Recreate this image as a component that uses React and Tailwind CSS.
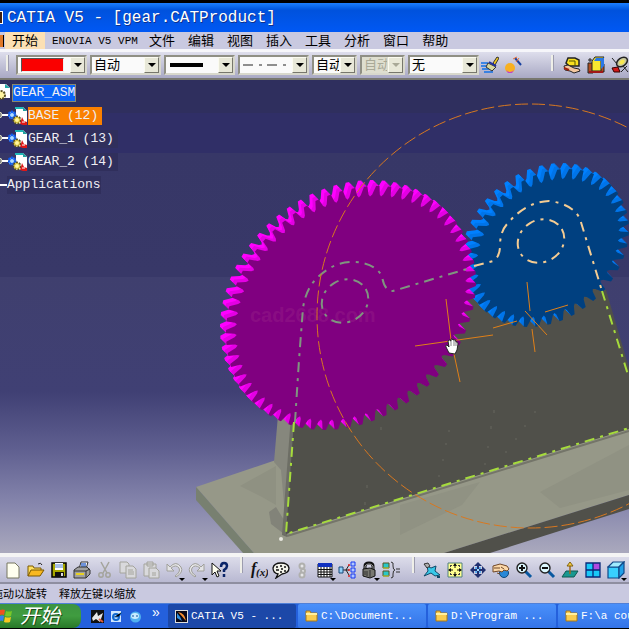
// 歯車の輪郭 (楕円上に歯を並べる)
const gearPath = ({ cx, cy, w, h, skew, teeth, root, phase }) => {
  const k = Math.sqrt(h * h - skew * skew);
  const step = (Math.PI * 2) / teeth;
  const profile = [
    [-0.5, root],
    [-0.34, root + (1 - root) * 0.2],
    [-0.14, 1],
    [0.14, 1],
    [0.34, root + (1 - root) * 0.2],
  ];
  const points = [];
  for (let i = 0; i < teeth; i++) {
    profile.forEach(([t, r]) => {
      const a = (i + t + phase) * step;
      const x = cx + r * w * Math.cos(a);
      const y = cy + r * (skew * Math.cos(a) + k * Math.sin(a));
      points.push(`${x.toFixed(1)},${y.toFixed(1)}`);
    });
  }
  return `M${points.join("L")}Z`;
};

const Gear = ({ shape, face, side, shade }) => {
  const d = gearPath(shape);
  return (
    <g>
      {[6, 5, 4, 3, 2, 1].map((n) => (
        <path key={n} d={d} fill={n > 3 ? side : shade} transform={`translate(${-n} ${-n})`} />
      ))}
      <path d={d} fill={face} />
    </g>
  );
};

const purpleGear = { cx: 351, cy: 308, w: 125, h: 122, skew: -26, teeth: 64, root: 0.915, phase: 0.2 };
const blueGear = { cx: 548, cy: 248, w: 81, h: 79, skew: -19, teeth: 42, root: 0.87, phase: 0.4 };

const Scene = () => (
  <svg
    className="absolute inset-0 h-full w-full"
    viewBox="0 80 629 473"
    preserveAspectRatio="xMinYMin slice"
    fill="none"
  >
    <defs>
      <linearGradient id="sky" x1="0" y1="80" x2="0" y2="553" gradientUnits="userSpaceOnUse">
        <stop offset="0" stopColor="#2f2f5e" />
        <stop offset="0.07" stopColor="#2f2f5e" />
        <stop offset="0.07" stopColor="#302f67" />
        <stop offset="0.154" stopColor="#302f67" />
        <stop offset="0.154" stopColor="#373767" />
        <stop offset="0.416" stopColor="#383868" />
        <stop offset="0.416" stopColor="#3f3f6e" />
        <stop offset="0.66" stopColor="#404074" />
        <stop offset="0.78" stopColor="#5f5f90" />
        <stop offset="0.9" stopColor="#8787ad" />
        <stop offset="1" stopColor="#aaa9bd" />
      </linearGradient>
    </defs>
    <rect y="80" width="1600" height="473" fill="url(#sky)" />

    {/* ベース */}
    <path d="M196 487L276 460L629 400V495L444 553H254Z" fill="#969888" />
    <path d="M240 486L276 466V505L262 497Z" fill="#8f9182" />
    <path d="M196 487L254 553H243L196 500Z" fill="#788070" />
    <path d="M444 553L629 495V509L490 553Z" fill="#50504a" />
    <path d="M400 505L480 482L462 505L400 535Z M540 492L629 445V490L560 508Z" fill="#909283" />
    <path d="M269 512L276 507L284 520V534L271 524Z" fill="#828379" />
    <path d="M278 415H296L287 538L281 470L274 462Z" fill="#86877d" />
    <path d="M291 415H298L287 537L282 535Z" fill="#6d6e65" />
    <path d="M286 534L294 420L303 300L390 290L480 265L600 290H606L629 368V429Z" fill="#50504a" />
    <path d="M287 536L629 431" stroke="#747569" strokeWidth="2" />
    <circle cx="281" cy="539" r="2" fill="#e8e8e0" />
    <path
      d="M381 427v3M367 485v3M365 502v3M449 430v2M446 443v2M443 459v2M439 475v2M494 410v3M491 426v3M488 446v2M485 463v2M535 411v2M525 425v2M516 438v2M506 451v2"
      stroke="#66665f"
    />

    <Gear shape={blueGear} face="#004080" side="#0080ff" shade="#0075ea" />
    <Gear shape={purpleGear} face="#800080" side="#ff00ff" shade="#e400e4" />

    <text
      x="250"
      y="322"
      fontSize="20"
      fontWeight="bold"
      fill="#b04890"
      fillOpacity="0.2"
      fontFamily="'Liberation Sans', sans-serif"
    >
      cad2688.com
    </text>

    {/* 鎖線のエッジ */}
    <g strokeWidth="2" strokeDasharray="10 6 3 6">
      <path d="M294 422L286 534L629 428" stroke="#a6dc3c" />
      <path d="M602 291L629 378" stroke="#a6dc3c" />
      <path
        d="M295 422L299 360L303 308Q306 288 318 277Q334 262 352 262Q374 262 382 276Q384 291 393 291L470 268"
        stroke="#7f957f"
      />
      <ellipse cx="345" cy="301" rx="24" ry="21" transform="rotate(-30 345 301)" stroke="#7f957f" />
      <path
        d="M474 266L493 261Q500 257 500 246Q500 231 508 223Q526 202 549 201Q573 204 580 219L602 291"
        stroke="#f5cc92"
      />
      <ellipse cx="541" cy="241" rx="24" ry="21" transform="rotate(-30 541 241)" stroke="#f5cc92" />
    </g>

    <ellipse cx="530" cy="316" rx="213" ry="212" stroke="#d87820" strokeDasharray="13 4" />
    <path
      d="M446 299L451 340L460 382M415 346L493 335M527 282L530 311M532 329L535 352M525 311L547 335M545 312L568 305M493 328L517 321"
      stroke="#e08018"
    />

    {/* 手のカーソル */}
    <path
      d="M449 353L446 347Q445 345 447 345L449 347L448 341Q449 339 451 341L451 339Q452 338 453 340L454 340Q456 339 456 342L457 342Q458 342 458 344L457 350L455 354Z"
      fill="#fff"
      stroke="#222"
    />
    <path d="M451 341v5M454 341v5M456 342v4" stroke="#555" strokeWidth="0.7" />
  </svg>
);

const PartIcon = () => (
  <svg width="20" height="20" viewBox="0 0 20 20" className="shrink-0">
    <path d="M8 1h7l4 4v13H8z" fill="#fff" />
    <path d="M7 2h8" stroke="#20b8b8" strokeWidth="2" />
    <path d="M15 1v4h4z" fill="#20a0a0" />
    <circle cx="4" cy="9" r="3.5" fill="#b0dcff" stroke="#0858f0" strokeWidth="2" strokeDasharray="2 1" />
    <circle cx="4" cy="9" r="2.5" fill="none" stroke="#0858f0" />
    <circle cx="9" cy="14" r="3.5" fill="#fff6a0" stroke="#595020" strokeWidth="2" strokeDasharray="2 1" />
    <circle cx="9" cy="14" r="2.5" fill="none" stroke="#d8c030" />
    <path d="M14 11l2 4 3 1v3h-4l-3-1 1-3z" fill="#e01818" />
    <path d="M14 16h3" stroke="#fff" />
  </svg>
);

const treeNodes = [
  { name: "BASE (12)", style: "bg-[#fa8000]" },
  { name: "GEAR_1 (13)", style: "bg-[#302f5c]" },
  { name: "GEAR_2 (14)", style: "bg-[#302f5c]" },
];

const Tree = () => (
  <ul className="absolute top-[3px] left-0 flex flex-col gap-[3px] font-['Liberation_Mono','Noto_Sans_CJK_SC',monospace] text-[13px] leading-5 text-[#eeeef4]">
    <li className="flex h-5 items-center">
      <svg width="12" height="20" viewBox="0 0 12 20">
        <path d="M0 1h6l4 4v10H0z" fill="#fff" />
        <path d="M5 1v4h5z" fill="#20a8a8" />
        <circle cx="1" cy="12" r="4" fill="#fff6a0" stroke="#595020" strokeWidth="2" strokeDasharray="2 1" />
      </svg>
      <span className="h-[18px] border border-[#8a8a70] bg-[#0a64f8] leading-4">GEAR_ASM</span>
    </li>
    {treeNodes.map((node) => (
      <li key={node.name} className="flex h-5 items-center">
        <svg width="8" height="20" viewBox="0 0 8 20">
          <circle cx="-1" cy="9" r="3" fill="#888" stroke="#d0d0b8" />
          <path d="M2 9h6" stroke="#fff" strokeWidth="2" />
        </svg>
        <PartIcon />
        <span className={`h-[18px] pr-1 leading-[18px] ${node.style}`}>{node.name}</span>
      </li>
    ))}
    <li className="flex h-5 items-center">
      <span className="h-[2px] w-[7px] bg-white"></span>
      <span className="h-[18px] bg-[#302f5c] leading-[18px]">Applications</span>
    </li>
  </ul>
);

const menus = ["文件", "编辑", "视图", "插入", "工具", "分析", "窗口", "帮助"];

const Combo = ({ label, value, width, disabled, children }) => (
  <div className={`relative h-5 shrink-0 ${width}`}>
    <select
      aria-label={label}
      disabled={disabled}
      className={`block h-5 w-full appearance-none overflow-hidden border-2 border-[#8f8f84] border-r-[#d8d8cc] border-b-[#d8d8cc] pl-[2px] pr-4 text-[13px] leading-4 ${
        disabled ? "bg-[#dedecf] text-[#a9a997]" : "bg-[#fafafa] text-black"
      }`}
    >
      <option>{value}</option>
    </select>
    {children}
    <span className="pointer-events-none absolute top-[2px] right-[2px] flex h-4 w-[15px] items-center justify-center border border-[#fbfbf0] border-r-[#77776c] border-b-[#77776c] bg-[#e8e8d8]">
      <svg width="8" height="4" viewBox="0 0 8 4">
        <path d="M0 0h8L4 4z" fill={disabled ? "#a9a997" : "#000"} />
      </svg>
    </span>
  </div>
);

const Tool = ({ label, width = "w-[23px]", more, children }) => (
  <button aria-label={label} className={`relative flex h-5 shrink-0 items-center justify-center ${width}`}>
    <svg width="18" height="18" viewBox="0 0 18 18" fill="none">
      {children}
    </svg>
    {more && (
      <svg className="absolute right-0 -bottom-[1px]" width="6" height="3" viewBox="0 0 6 3">
        <path d="M0 0h6L3 3z" fill="#000" />
      </svg>
    )}
  </button>
);

const Grip = ({ className }) => (
  <span className={`h-4 w-[3px] shrink-0 self-start border-r border-[#9c9cae] bg-[#efefe8] ${className}`}></span>
);

const fileTools = [
  { label: "新建", art: <path d="M3 2h8l4 4v11H3z" fill="#fffff0" stroke="#777760" /> },
  {
    label: "打开",
    art: (
      <g stroke="#7a5800">
        <path d="M1 15V5h5l1 2h7v3" fill="#ffe060" />
        <path d="M1 15l3-6h13l-4 6z" fill="#f8b820" />
        <path d="M11 3q3-2 4 1" stroke="#222" />
      </g>
    ),
  },
  {
    label: "保存",
    art: (
      <g>
        <path d="M2 2h14v14H2z" fill="#a8a800" stroke="#000" strokeWidth="1.5" />
        <path d="M5 2h8v7H5z" fill="#fff" />
        <path d="M5 4h8M5 6h8" stroke="#5080d0" />
        <path d="M5 11h9v5H5z" fill="#111" />
        <path d="M11 12h2v3h-2z" fill="#ddd" />
      </g>
    ),
  },
  {
    label: "打印",
    art: (
      <g stroke="#333">
        <path d="M6 8l2-7h7l-2 7z" fill="#fff" />
        <path d="M8 3h5M8 5h5" stroke="#4070d0" strokeWidth="1.5" />
        <path d="M1 9l4-3h9l3 3v4l-4 4H1z" fill="#a0a0a0" />
        <path d="M1 10h12l4-2M13 10v7" />
        <path d="M3 13h8" stroke="#e8d020" strokeWidth="2" />
      </g>
    ),
  },
  {
    label: "剪切",
    art: (
      <g stroke="#a4a49c" strokeWidth="1.5">
        <path d="M5 1l6 11M13 1L7 12" />
        <circle cx="5" cy="14" r="2.2" />
        <circle cx="12" cy="14" r="2.2" />
      </g>
    ),
  },
  {
    label: "复制",
    art: (
      <g stroke="#a4a49c" fill="#d9d9dc">
        <path d="M1 1h7l2 2v9H1z" />
        <path d="M7 5h7l3 3v9H7z" />
        <path d="M9 9h5M9 11h6M9 13h6" />
      </g>
    ),
  },
  {
    label: "粘贴",
    art: (
      <g stroke="#a4a49c" fill="#d9d9dc">
        <path d="M2 3h12v12H2zM5 1h6v4H5z" />
        <path d="M7 7h7l3 3v7H7z" />
        <path d="M10 12h4M10 14h4" />
      </g>
    ),
  },
  {
    label: "撤消",
    more: true,
    art: <path d="M2 3v7h7L6 7q5-4 8 0 2 4-4 8l1 1q8-5 5-10Q11-1 5 6z" fill="#e4e4e6" stroke="#a0a09a" />,
  },
  {
    label: "重做",
    more: true,
    art: <path d="M16 3v7H9l3-3Q7 3 4 7q-2 4 4 8l-1 1Q-1 11 2 6q5-7 11 0z" fill="#e4e4e6" stroke="#a0a09a" />,
  },
  {
    label: "这是什么",
    art: (
      <g>
        <path d="M1 2v12l3-3 2 5 2-1-2-5h4z" fill="#fffff0" stroke="#111" />
        <path d="M10 6q0-4 3-4t3 3q0 2-3 4v2M13 13v3" stroke="#0a2468" strokeWidth="2.5" />
      </g>
    ),
  },
];

const knowledgeTools = [
  {
    label: "公式",
    art: (
      <g fill="#111" fontFamily="'Liberation Serif', serif" fontStyle="italic" fontWeight="bold">
        <text x="1" y="13" fontSize="16">f</text>
        <text x="6" y="15" fontSize="11">(x)</text>
      </g>
    ),
  },
  {
    label: "注释",
    art: (
      <g stroke="#111">
        <path d="M9 2Q16 2 17 7q0 5-7 6l-6 4 2-4Q1 12 1 7q1-5 8-5z" fill="#f2f2ea" strokeWidth="1.3" />
        <path d="M4 6h2M8 5h2M12 6h2M4 9h3M9 8h2M12 10h2M8 11h2" strokeWidth="1.5" />
      </g>
    ),
  },
  {
    label: "链接",
    art: (
      <g stroke="#b0b0ae" strokeWidth="2" fill="#e6e6e8">
        <circle cx="8" cy="5" r="2.5" />
        <circle cx="9" cy="10" r="2" />
        <circle cx="8" cy="14" r="2.5" />
      </g>
    ),
  },
  {
    label: "设计表",
    more: true,
    art: (
      <g>
        <path d="M2 3h14v13H2z" fill="#fff" stroke="#111" />
        <path d="M2 2h14v4H2z" fill="#1030c0" />
        <path d="M2 8.5h14M2 11h14M2 13.5h14M5 6v10M8 6v10M11 6v10M14 6v10" stroke="#111" />
      </g>
    ),
  },
  {
    label: "关系",
    art: (
      <g>
        <path d="M5 9h6M8 9l3-5M8 9l3 5" stroke="#222" />
        <path d="M1 6h4v6H1z" fill="#90d0f8" stroke="#184878" />
        <path d="M13 1h4v4h-4zM13 7h4v4h-4zM13 13h4v4h-4z" fill="#b0c8ff" stroke="#1838f0" />
        <path d="M10 4h2M10 9h2M10 15h2" stroke="#e02020" strokeWidth="1.5" />
      </g>
    ),
  },
  {
    label: "锁定",
    more: true,
    art: (
      <g stroke="#111">
        <path d="M5 9V5q0-3 4-3t4 3v4" strokeWidth="3" />
        <path d="M5 8V5q1-2 4-2t4 2v3" stroke="#999" />
        <path d="M3 8l7-1 5 2v6l-5 2-7-2z" fill="#777770" />
        <path d="M10 9v8M5 10v4M7 10v5" stroke="#333" />
      </g>
    ),
  },
  {
    label: "等效尺寸",
    art: (
      <g>
        <path d="M1 2h6v5H1zM1 10h6v5H1z" fill="#28c8c8" stroke="#555520" />
        <path d="M1 7h6M1 15h6" stroke="#c8c820" />
        <path d="M9 1q3 0 2 4 0 4 2 4-2 0-2 4 1 4-2 4M14 8h4M14 11h4" stroke="#333" />
      </g>
    ),
  },
];

const lens = (
  <g>
    <path d="M10 10l6 6" stroke="#0858a0" strokeWidth="3" />
    <circle cx="7" cy="7" r="5" fill="#dcf8ff" stroke="#222" strokeWidth="1.4" />
  </g>
);

const viewTools = [
  {
    label: "飞行模式",
    art: (
      <g>
        <path d="M4 5l4 2 5-2-1 5 5 4-5 1-4-3-7 3 4-5z" fill="#38c8e8" stroke="#104868" />
        <path d="M1 3l4-1 2 3-3 2z" fill="#b0b0b0" stroke="#333" />
        <path d="M14 16h3" stroke="#104868" strokeWidth="2" />
      </g>
    ),
  },
  {
    label: "全部适应",
    art: (
      <g>
        <path d="M2 2h14v14H2z" fill="#ffff90" stroke="#508080" />
        <path d="M9 3v4M9 11v4M3 9h4M11 9h4" stroke="#111" />
        <path d="M7 5l2-3 2 3zM7 13l2 3 2-3zM5 7L2 9l3 2zM13 7l3 2-3 2z" fill="#111" />
        <path d="M4 4h2v1H5v1H4zM14 4h-2v1h1v1h1zM4 14h2v-1H5v-1H4zM14 14h-2v-1h1v-1h1z" fill="#444" />
      </g>
    ),
  },
  {
    label: "平移",
    art: (
      <g>
        <path d="M9 1l4 4h-3v3h3V5l4 4-4 4v-3h-3v3h3l-4 4-4-4h3v-3H5v3L1 9l4-4v3h3V5H5z" fill="#203070" />
        <path d="M6 6h2v2H6zM10 6h2v2h-2zM6 10h2v2H6zM10 10h2v2h-2z" fill="#60b0f0" />
        <path d="M8 8h2v2H8z" fill="#a0e0ff" />
      </g>
    ),
  },
  {
    label: "旋转",
    art: (
      <g>
        <circle cx="12" cy="12" r="4.5" fill="#2888d8" stroke="#104878" />
        <path d="M1 5l7-2 7 2 2 3-2 2-3-1-2 2-3-1-6 1z" fill="#fcd8a8" stroke="#704828" />
        <path d="M2 7h6M9 6l3 2M5 12l3 1" stroke="#704828" />
      </g>
    ),
  },
  {
    label: "放大",
    art: (
      <g>
        {lens}
        <path d="M7 4v6M4 7h6" stroke="#111" strokeWidth="2" />
      </g>
    ),
  },
  {
    label: "缩小",
    art: (
      <g>
        {lens}
        <path d="M4 7h6" stroke="#111" strokeWidth="2" />
      </g>
    ),
  },
  {
    label: "法线视图",
    art: (
      <g>
        <path d="M1 16l4-6h12l-4 6z" fill="#189890" stroke="#105850" />
        <path d="M9 13V4" stroke="#a06820" strokeWidth="1.5" />
        <path d="M6 5l3-4 3 4z" fill="#f8d040" stroke="#806010" />
      </g>
    ),
  },
  {
    label: "多视图",
    art: (
      <g>
        <path d="M2 2h14v14H2z" fill="#18c8f8" />
        <path d="M9 2h7v7H9z" fill="#b048e0" />
        <path d="M2 2h14v14H2zM9 2v14M2 9h14" stroke="#082878" strokeWidth="1.3" />
      </g>
    ),
  },
  {
    label: "等轴测视图",
    more: true,
    art: (
      <g stroke="#104888" strokeWidth="1.2">
        <path d="M1 6h11v11H1z" fill="#38d0ff" />
        <path d="M1 6l5-5h11l-5 5z" fill="#a0ecff" />
        <path d="M12 6l5-5v11l-5 5z" fill="#20a0e8" />
      </g>
    ),
  },
];

const Folder = () => (
  <svg width="13" height="12" viewBox="0 0 13 12" className="shrink-0">
    <path d="M1 3V1h4l1 2h6v8H1z" fill="#f8cc50" stroke="#a87818" />
    <path d="M1 4h11" stroke="#fff0a0" strokeWidth="2" />
  </svg>
);

const CatiaMark = () => (
  <svg width="13" height="13" viewBox="0 0 13 13" className="shrink-0">
    <path d="M0 0h13v13H0z" fill="#080818" stroke="#ddd" strokeWidth="2" />
    <path d="M3 2q7 1 8 9-4-5-8-9z" fill="#f89030" />
    <path d="M2 3q3 3 5 8L2 8z" fill="#3090e0" />
  </svg>
);

const tasks = [
  { title: "CATIA V5 - ...", active: true },
  { title: "C:\\Document..." },
  { title: "D:\\Program ..." },
  { title: "F:\\a cou" },
];

const App = () => {
  return (
    <div className="flex min-h-screen w-full flex-col overflow-hidden bg-[#c9c9e0] font-['Liberation_Sans','Noto_Sans_CJK_SC',sans-serif] text-black">
      {/* タイトル */}
      <header className="flex h-8 items-center border-t-[3px] border-black bg-linear-to-b from-[#1c80ff] via-[#0052dd] via-25% to-[#0058f4] font-['Liberation_Mono','Noto_Sans_CJK_SC',monospace]">
        <span className="mr-1 h-[13px] w-[3px] border border-l-0 border-white bg-[#402010]"></span>
        <h1 className="text-base leading-5 font-normal whitespace-nowrap text-white [text-shadow:1px_1px_#10308a]">
          CATIA V5 - [gear.CATProduct]
        </h1>
      </header>

      {/* メニュー */}
      <nav className="flex h-[17px] items-center gap-[13px] overflow-hidden text-[13px] leading-4 whitespace-nowrap">
        <div className="flex h-full items-center">
          <span className="mr-px h-3 w-1 border-r border-black bg-[#e07828]"></span>
          <button className="-mr-[6px] h-full bg-[#fce0b4] px-[7px]">开始</button>
        </div>
        <button className="w-[84px] font-['Liberation_Mono','Noto_Sans_CJK_SC',monospace] text-[11px]">
          ENOVIA V5 VPM
        </button>
        {menus.map((menu) => (
          <button key={menu}>{menu}</button>
        ))}
      </nav>

      {/* 図形プロパティ */}
      <div className="flex h-[31px] items-start gap-[3px] overflow-hidden border-t-[3px] border-b-2 border-t-[#f6f6fa] border-b-[#77776e] bg-linear-to-b from-[#dedeec] to-[#a9a9c4] pt-[3px] pl-[6px]">
        <Grip className="mr-1" />
        <Combo label="颜色" value="" width="w-[71px]">
          <span className="pointer-events-none absolute top-[3px] left-[5px] h-[14px] w-[43px] border border-t-[#555] border-l-[#555] border-r-[#eee] border-b-[#eee] bg-[#fa0000]"></span>
        </Combo>
        <Combo label="透明度" value="自动" width="w-[71px]" />
        <Combo label="线宽" value="" width="w-[71px]">
          <span className="pointer-events-none absolute top-2 left-[6px] h-1 w-[33px] bg-black"></span>
        </Combo>
        <Combo label="线型" value="" width="w-[71px]">
          <svg className="pointer-events-none absolute top-[9px] left-[5px]" width="48" height="2" viewBox="0 0 48 2">
            <path d="M0 1h48" stroke="#222" strokeDasharray="10 6 3 5" />
          </svg>
        </Combo>
        <Combo label="点型" value="自动" width="w-[45px]" />
        <Combo label="渲染" value="自动" width="w-[45px]" disabled />
        <Combo label="图层" value="无" width="w-[71px]" />
        <div className="-ml-1 flex">
          <Tool label="格式刷">
            <path d="M0 7h7M0 10h7M1 13h9M3 16h9" stroke="#1070e8" strokeWidth="1.5" />
            <path d="M12 7l4-6 2 1-4 7z" fill="#f0c820" stroke="#333" />
            <path d="M7 7l8 4-4 4-6-4z" fill="#d8d8a0" stroke="#333" />
            <path d="M8 6l7 4" stroke="#2030a0" strokeWidth="2" />
          </Tool>
          <Tool label="向导">
            <circle cx="6" cy="12" r="5" fill="#f8b020" />
            <path d="M2 14q4 4 8 0l-2 3H4z" fill="#c040d0" />
            <path d="M11 2l6 7" stroke="#1840a0" strokeWidth="2" />
            <path d="M9 3l4-2M12 6l3-4" stroke="#f07030" />
          </Tool>
        </div>
        <Grip className="mr-[3px] ml-6" />
        <div className="flex">
          <Tool label="产品" width="w-6">
            <path d="M5 2h7l4 2v6H6L3 7z" fill="#f8e020" stroke="#222" strokeWidth="1.5" />
            <path d="M6 5h6v5" stroke="#555500" />
            <path d="M1 10l4-1 6 3 5 1 1 2-6 2-4-2-5-1z" fill="#f4c8a0" stroke="#222" />
            <path d="M1 12l5 2" stroke="#a02010" strokeWidth="2" />
          </Tool>
          <Tool label="零件" width="w-6">
            <path d="M1 7h5v10H1zM11 8h6v8h-6z" fill="#b05020" stroke="#222" />
            <path d="M5 5l3-4h9l-3 4v10H5z" fill="#f8e830" stroke="#222" />
            <path d="M9 2h7l-2 3H7zM14 5l3-4v9l-3 3z" fill="#2878e8" />
            <path d="M1 4h4M3 2v4" stroke="#222" />
            <path d="M2 16h14" stroke="#a01818" strokeWidth="2" />
          </Tool>
          <Tool label="分析" width="w-6">
            <ellipse cx="11" cy="6" rx="6" ry="4" transform="rotate(-35 11 6)" fill="#c8c8a0" stroke="#222" strokeWidth="1.5" />
            <ellipse cx="11" cy="6" rx="3" ry="2" transform="rotate(-35 11 6)" fill="#f8e850" />
            <path d="M1 2l5 6M12 10l5 6M16 10l-6 6" stroke="#222" />
            <path d="M1 12l6-1 2 5H3z" fill="#d01818" stroke="#300" />
          </Tool>
        </div>
      </div>

      {/* 3D ビュー */}
      <main className="relative min-h-[300px] flex-1 overflow-hidden bg-[#38386a]">
        <Scene />
        <Tree />
      </main>

      {/* 標準ツールバー */}
      <div className="flex h-[31px] items-center overflow-hidden border-t-4 border-b-2 border-t-[#f4f4f4] border-b-[#8e8ea0] bg-linear-to-b from-[#dcdcea] to-[#b9b9d2] pl-px">
        {fileTools.map((tool) => (
          <Tool key={tool.label} label={tool.label} more={tool.more}>{tool.art}</Tool>
        ))}
        <Grip className="mr-[5px] ml-[9px]" />
        {knowledgeTools.map((tool) => (
          <Tool key={tool.label} label={tool.label} more={tool.more} width="w-[22px]">{tool.art}</Tool>
        ))}
        <Grip className="mr-[5px] ml-[10px]" />
        {viewTools.map((tool) => (
          <Tool key={tool.label} label={tool.label} more={tool.more}>{tool.art}</Tool>
        ))}
      </div>

      <p className="flex h-[19px] items-center gap-3 overflow-hidden text-[11px] leading-4 whitespace-nowrap">
        <span className="-ml-2">拖动以旋转</span>
        <span>释放左键以缩放</span>
      </p>

      {/* タスクバー */}
      <footer className="flex h-[26px] items-stretch overflow-hidden border-t border-b border-t-[#5080d8] border-b-black bg-[#2460dc] text-white">
        <button className="flex w-[81px] shrink-0 items-center gap-[7px] rounded-r-lg bg-linear-to-b from-[#3c9440] via-[#409c40] to-[#287828] text-xl leading-6 italic [text-shadow:1px_1px_#1c4c1c]">
          <svg width="13" height="16" viewBox="0 0 13 16">
            <path d="M0 2q3-1 5 0L4 7q-2-1-4 0z" fill="#f05020" />
            <path d="M6 3q3 1 6 0l-1 5q-3 1-6 0z" fill="#78c828" />
            <path d="M0 8q2-1 4 0l-1 5q-2-1-3 0z" fill="#3880f0" />
            <path d="M5 9q3 1 6 0l-1 5q-3 1-6 0z" fill="#f8c820" />
          </svg>
          开始
        </button>
        <div className="flex w-[87px] shrink-0 items-center gap-[6px] pl-[10px] text-sm leading-4">
          <button aria-label="CATIA">
            <svg width="13" height="13" viewBox="0 0 13 13">
              <path d="M0 0h13v13H0z" fill="#111" />
              <path d="M1 8l5-6 1 4 5-3-3 9-4-3-3 2z" fill="#e8e8e8" />
              <path d="M8 9l4 3" stroke="#e06040" strokeWidth="2" />
            </svg>
          </button>
          <button aria-label="浏览器">
            <svg width="13" height="13" viewBox="0 0 13 13">
              <path d="M1 1h10v11H1z" fill="#cfe6ff" />
              <circle cx="6" cy="7" r="3" fill="none" stroke="#1068d0" strokeWidth="2" />
              <path d="M4 7h5l3-5" stroke="#1068d0" />
            </svg>
          </button>
          <button aria-label="桌面">
            <svg width="13" height="13" viewBox="0 0 13 13">
              <circle cx="6.5" cy="7" r="5.5" fill="#50b0f0" />
              <ellipse cx="6" cy="6" rx="4" ry="3" fill="#c8ecff" />
              <path d="M4 5v2M8 5v2" stroke="#1050a0" />
            </svg>
          </button>
          <span className="ml-1 self-start">»</span>
        </div>
        <div className="flex min-w-0 flex-1 font-['Liberation_Mono','Noto_Sans_CJK_SC',monospace] text-[11px] leading-4">
          {tasks.map((task) => (
            <button
              key={task.title}
              className={`mr-[2px] flex w-32 shrink-0 items-center gap-[3px] rounded-xs pl-[7px] whitespace-pre ${
                task.active ? "bg-[#1c48a8]" : "bg-linear-to-b from-[#4a90fa] to-[#3474e8]"
              }`}
            >
              {task.active ? <CatiaMark /> : <Folder />}
              {task.title}
            </button>
          ))}
        </div>
      </footer>
    </div>
  );
};

export default App;
